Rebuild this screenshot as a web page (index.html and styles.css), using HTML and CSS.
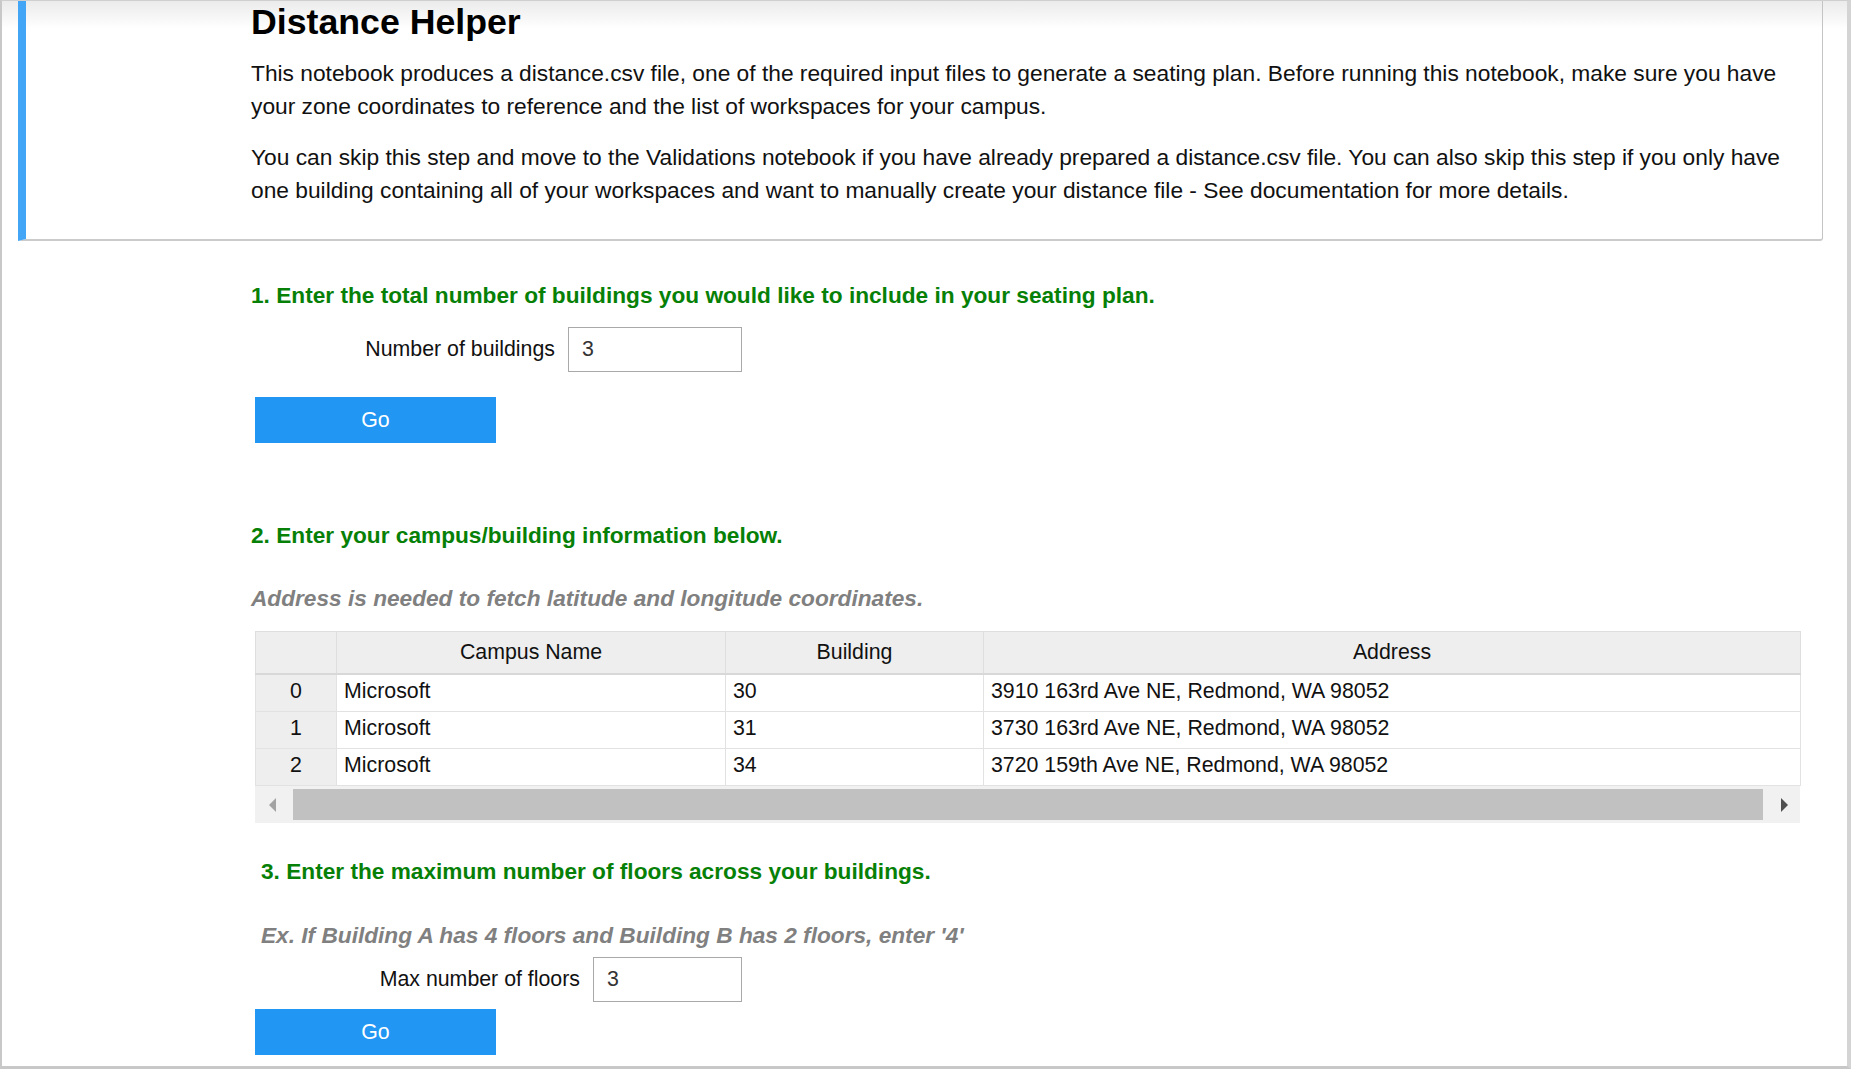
FILE: index.html
```html
<!DOCTYPE html>
<html>
<head>
<meta charset="utf-8">
<link rel="stylesheet" href="styles.css">
</head>
<body>
<div class="frame">
  <div class="card">
    <h1 class="title">Distance Helper</h1>
    <p class="para">This notebook produces a distance.csv file, one of the required input files to generate a seating plan. Before running this notebook, make sure you have your zone coordinates to reference and the list of workspaces for your campus.</p>
    <p class="para para-2">You can skip this step and move to the Validations notebook if you have already prepared a distance.csv file. You can also skip this step if you only have one building containing all of your workspaces and want to manually create your distance file - See documentation for more details.</p>
  </div>

  <div class="section">
    <div class="step step-1">1. Enter the total number of buildings you would like to include in your seating plan.</div>
    <div class="field field-1">
      <label class="field-label">Number of buildings</label>
      <input class="field-input input-1" type="text" value="3">
    </div>
    <button class="go go-1">Go</button>

    <div class="step step-2">2. Enter your campus/building information below.</div>
    <div class="note note-2">Address is needed to fetch latitude and longitude coordinates.</div>

    <div class="grid">
      <table class="table">
        <colgroup>
          <col class="c-idx"><col class="c-campus"><col class="c-bld"><col class="c-addr">
        </colgroup>
        <thead>
          <tr><th class="idx"></th><th>Campus Name</th><th>Building</th><th>Address</th></tr>
        </thead>
        <tbody>
          <tr><td class="idx">0</td><td>Microsoft</td><td>30</td><td>3910 163rd Ave NE, Redmond, WA 98052</td></tr>
          <tr><td class="idx">1</td><td>Microsoft</td><td>31</td><td>3730 163rd Ave NE, Redmond, WA 98052</td></tr>
          <tr><td class="idx">2</td><td>Microsoft</td><td>34</td><td>3720 159th Ave NE, Redmond, WA 98052</td></tr>
        </tbody>
      </table>
      <div class="hscroll">
        <span class="arrow arrow-left"></span>
        <div class="thumb"></div>
        <span class="arrow arrow-right"></span>
      </div>
    </div>

    <div class="step step-3">3. Enter the maximum number of floors across your buildings.</div>
    <div class="note note-3">Ex. If Building A has 4 floors and Building B has 2 floors, enter '4'</div>
    <div class="field field-2">
      <label class="field-label">Max number of floors</label>
      <input class="field-input input-2" type="text" value="3">
    </div>
    <button class="go go-2">Go</button>
  </div>
</div>
</body>
</html>
```

FILE: styles.css
```css
html, body {
  margin: 0;
  padding: 0;
  background: #fff;
}

body {
  font-family: "Liberation Sans", Arial, sans-serif;
  color: #000;
}

.frame {
  width: 1851px;
  height: 1069px;
  box-sizing: border-box;
  border-top: 1px solid #cfcfcf;
  border-left: 2px solid #c8c8c8;
  border-right: 4px solid #d4d4d4;
  border-bottom: 3px solid #c8c8c8;
  background: linear-gradient(#ebebeb, #ffffff 28px);
  overflow: hidden;
}

/* ---------- intro card ---------- */
.card {
  margin-left: 16px;
  width: 1805px;
  box-sizing: border-box;
  border-left: 8px solid #42a5f5;
  border-right: 1px solid #c4c4c4;
  border-bottom: 2px solid #cbcbcb;
  border-bottom-right-radius: 3px;
  padding: 1px 21px 32px 225px;
}

.title {
  margin: 0;
  font-size: 35.7px;
  line-height: 40px;
  font-weight: bold;
}

.para {
  margin: 15px 0 0;
  font-size: 22.75px;
  line-height: 33px;
  color: #111;
}

.para-2 {
  margin-top: 18px;
}

/* ---------- sections ---------- */
.section {
  margin-left: 249px;
  display: flex;
  flex-direction: column;
  align-items: flex-start;
}

.step {
  color: #078007;
  font-weight: bold;
  font-size: 22.67px;
  line-height: 24px;
}

.step-1 { margin-top: 42px; }
.step-2 { margin-top: 80px; }
.step-3 { margin-top: 36px; margin-left: 10px; }

.note {
  color: #808080;
  font-weight: bold;
  font-style: italic;
  font-size: 22.67px;
  line-height: 24px;
}

.note-2 { margin-top: 39px; }
.note-3 { margin-top: 40px; margin-left: 10px; }

.field {
  display: flex;
  align-items: center;
  justify-content: flex-end;
  width: 491px;
  height: 45px;
}

.field-1 { margin-top: 20px; }
.field-2 { margin-top: 10px; }

.field-label {
  font-size: 21.33px;
  color: #111;
  margin-right: 13px;
  white-space: nowrap;
}

.field-input {
  height: 45px;
  box-sizing: border-box;
  border: 1px solid #a9a9a9;
  padding: 0 0 0 13px;
  font-family: "Liberation Sans", Arial, sans-serif;
  font-size: 21.33px;
  color: #333;
  background: #fff;
  outline: none;
}

.input-1 { width: 174px; }
.input-2 { width: 149px; }

.go {
  margin-left: 4px;
  width: 241px;
  height: 46px;
  border: none;
  background: #2196f3;
  color: #fff;
  font-family: "Liberation Sans", Arial, sans-serif;
  font-size: 21.33px;
  padding: 0;
}

.go-1 { margin-top: 25px; }
.go-2 { margin-top: 7px; }

/* ---------- grid ---------- */
.grid {
  margin-top: 21px;
  margin-left: 4px;
  width: 1545px;
}

.table {
  width: 1545px;
  border-collapse: collapse;
  table-layout: fixed;
  font-size: 21.33px;
  color: #111;
}

.c-idx { width: 81px; }
.c-campus { width: 389px; }
.c-bld { width: 258px; }
.c-addr { width: 817px; }

.table th {
  height: 41px;
  background: #eeeeee;
  font-weight: normal;
  text-align: center;
  border: 1px solid #dedede;
  border-bottom: 2px solid #d8d8d8;
  padding: 0;
}

.table td {
  height: 33px;
  border: 1px solid #e2e2e2;
  padding: 0 0 3px 7px;
  background: #fff;
  white-space: nowrap;
}

.table td.idx {
  background: #eeeeee;
  text-align: center;
  padding: 0 0 3px;
}

.hscroll {
  display: flex;
  align-items: center;
  height: 37px;
  background: #f1f1f1;
}

.arrow {
  width: 0;
  height: 0;
  border-top: 7px solid transparent;
  border-bottom: 7px solid transparent;
}

.arrow-left {
  margin-left: 14px;
  margin-right: 17px;
  border-right: 7px solid #a3a3a3;
}

.arrow-right {
  margin-left: 18px;
  border-left: 7px solid #505050;
}

.thumb {
  width: 1470px;
  height: 31px;
  background: #c1c1c1;
}
```
